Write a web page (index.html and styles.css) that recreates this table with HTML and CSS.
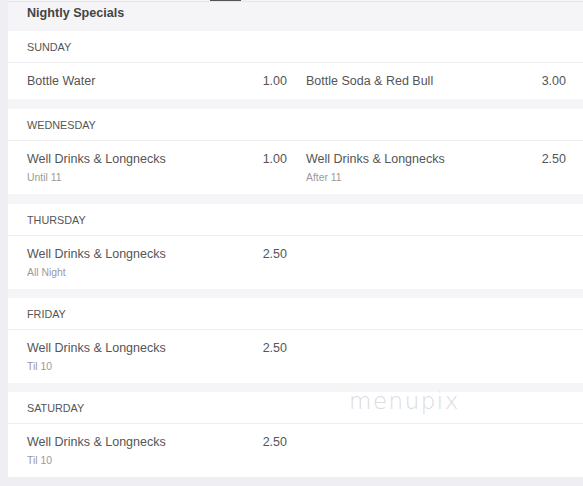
FILE: index.html
```html
<!DOCTYPE html>
<html lang="en">
<head>
  <meta charset="UTF-8" />
  <meta name="viewport" content="width=device-width, initial-scale=1.0" />
  <title>Nightly Specials</title>
  <link rel="stylesheet" href="styles.css">
</head>
<body>
  <div class="page">
    <div class="tab-strip"><span class="tab-mark"></span></div>
    <div class="menu-card">
      <h3 class="menu-title">Nightly Specials</h3>

      <div class="day-section">
        <div class="day-name">SUNDAY</div>
        <div class="day-items">
          <div class="item">
            <div class="item-text"><div class="item-name">Bottle Water</div></div>
            <div class="item-price">1.00</div>
          </div>
          <div class="item">
            <div class="item-text"><div class="item-name">Bottle Soda &amp; Red Bull</div></div>
            <div class="item-price">3.00</div>
          </div>
        </div>
      </div>

      <div class="day-section">
        <div class="day-name">WEDNESDAY</div>
        <div class="day-items">
          <div class="item">
            <div class="item-text">
              <div class="item-name">Well Drinks &amp; Longnecks</div>
              <div class="item-note">Until 11</div>
            </div>
            <div class="item-price">1.00</div>
          </div>
          <div class="item">
            <div class="item-text">
              <div class="item-name">Well Drinks &amp; Longnecks</div>
              <div class="item-note">After 11</div>
            </div>
            <div class="item-price">2.50</div>
          </div>
        </div>
      </div>

      <div class="day-section">
        <div class="day-name">THURSDAY</div>
        <div class="day-items">
          <div class="item">
            <div class="item-text">
              <div class="item-name">Well Drinks &amp; Longnecks</div>
              <div class="item-note">All Night</div>
            </div>
            <div class="item-price">2.50</div>
          </div>
        </div>
      </div>

      <div class="day-section">
        <div class="day-name">FRIDAY</div>
        <div class="day-items">
          <div class="item">
            <div class="item-text">
              <div class="item-name">Well Drinks &amp; Longnecks</div>
              <div class="item-note">Til 10</div>
            </div>
            <div class="item-price">2.50</div>
          </div>
        </div>
      </div>

      <div class="day-section">
        <div class="day-name">SATURDAY</div>
        <div class="day-items">
          <div class="item">
            <div class="item-text">
              <div class="item-name">Well Drinks &amp; Longnecks</div>
              <div class="item-note">Til 10</div>
            </div>
            <div class="item-price">2.50</div>
          </div>
        </div>
        <span class="watermark">menupix</span>
      </div>
    </div>
  </div>
</body>
</html>
```

FILE: styles.css
```css
body {
  margin: 0;
  padding: 0;
  background: #efeff3;
  font-family: "Liberation Sans", Arial, sans-serif;
  color: #555;
  overflow: hidden;
}
.page {
  padding-left: 8px;
}
.tab-strip {
  height: 1px;
  background: #f5f5f7;
}
.tab-mark {
  display: block;
  width: 31px;
  height: 1px;
  margin-left: 202px;
  background: #555;
}
.menu-card {
  background: #f5f5f7;
  border-top: 1px solid #e6e6e9;
}
.menu-title {
  margin: 0;
  padding: 3px 19px 0 19px;
  height: 26px;
  font-size: 12.6px;
  font-weight: 700;
  color: #444;
  line-height: 16px;
}
.day-section {
  position: relative;
  background: #fff;
  margin-bottom: 10px;
}
.day-section:nth-child(4),
.day-section:nth-child(5) {
  margin-bottom: 9px;
}
.day-section:last-child {
  margin-bottom: 0;
}
.day-name {
  padding: 9px 19px 7px 19px;
  height: 15px;
  line-height: 15px;
  font-size: 10.8px;
  color: #555;
  border-bottom: 1px solid #eeeef0;
}
.day-items {
  display: grid;
  grid-template-columns: 260px 260px;
  column-gap: 19px;
  padding: 0 19px;
}
.item {
  display: flex;
  justify-content: space-between;
  align-items: flex-start;
  padding: 10px 0 10px 0;
}
.item-name {
  font-size: 12.5px;
  line-height: 16px;
  color: #555;
}
.item-note {
  margin-top: 4px;
  font-size: 10.4px;
  line-height: 13px;
  color: #9a9a9a;
}
.item-price {
  font-size: 12.5px;
  line-height: 16px;
  color: #555;
}
.watermark {
  position: absolute;
  left: 341px;
  top: -4px;
  font-family: "DejaVu Sans", sans-serif;
  font-size: 23px;
  font-weight: 200;
  letter-spacing: 1.5px;
  color: #dcdcdc;
}
```
